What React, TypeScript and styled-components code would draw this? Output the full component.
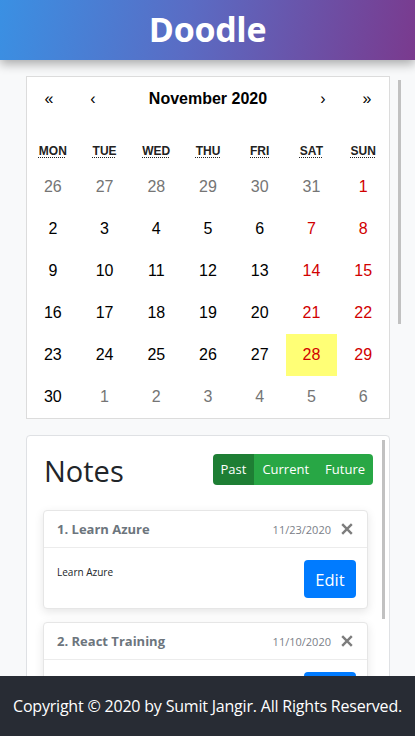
import React from "react";
import styled, { createGlobalStyle } from "styled-components";

const GlobalStyle = createGlobalStyle`
  * { box-sizing: border-box; }
  html, body { margin: 0; padding: 0; height: 100%; }
  body {
    background: #f8f9fa;
    font-family: "Open Sans", "Noto Sans", sans-serif;
    color: #212529;
  }
`;

const Page = styled.div`
  height: 100vh;
  display: flex;
  flex-direction: column;
  overflow: hidden;
`;

const Header = styled.header`
  height: 60px;
  flex: 0 0 60px;
  display: flex;
  align-items: center;
  justify-content: center;
  background: linear-gradient(100deg, #3a90e3 0%, #5a6cc4 45%, #7a3a8e 100%);
  box-shadow: 0 4px 10px rgba(0, 0, 0, 0.32);
  position: relative;
  z-index: 2;
`;

const Title = styled.h1`
  margin: 0;
  color: #fff;
  font-family: "Open Sans", sans-serif;
  font-weight: 700;
  font-size: 34px;
  letter-spacing: -0.3px;
  line-height: 1;
  padding-bottom: 2px;
`;

const Main = styled.main`
  flex: 1;
  overflow: hidden;
  padding: 16px 0 0 26px;
  display: flex;
  flex-direction: column;
  gap: 16px;
`;

const CalendarRow = styled.div`
  display: flex;
  gap: 8px;
  align-items: flex-start;
`;

const Thumb = styled.div<{ $h: number; $right?: number }>`
  width: 3px;
  height: ${(p) => p.$h}px;
  margin-top: 4px;
  margin-right: ${(p) => p.$right ?? 0}px;
  background: #c1c1c1;
  flex: 0 0 3px;
`;

const Calendar = styled.div`
  width: 364px;
  background: #fff;
  border: 1px solid #dcdcdc;
  font-family: "Liberation Sans", Arial, sans-serif;
`;

const Nav = styled.div`
  display: flex;
  height: 44px;
  margin-bottom: 16px;
`;

const NavButton = styled.button`
  width: 44px;
  flex: 0 0 44px;
  background: none;
  border: 0;
  font-family: "Liberation Sans", Arial, sans-serif;
  font-size: 16px;
  color: #000;
  padding: 0;
`;

const NavLabel = styled.div`
  flex: 1;
  display: flex;
  align-items: center;
  justify-content: center;
  font-weight: 700;
  font-size: 16px;
  color: #000;
`;

const Grid = styled.div`
  display: grid;
  grid-template-columns: repeat(7, 1fr);
`;

const Weekday = styled.div`
  height: 29px;
  display: flex;
  align-items: center;
  justify-content: center;
  font-size: 12px;
  font-weight: 700;
  color: #222;
  padding-bottom: 1px;
`;

const Abbr = styled.abbr`
  text-decoration: underline dotted;
  text-underline-offset: 2px;
  text-decoration-thickness: 1px;
`;

const Tile = styled.div<{ $tone: "normal" | "other" | "weekend"; $today?: boolean }>`
  height: 42px;
  display: flex;
  align-items: center;
  justify-content: center;
  font-size: 16px;
  background: ${(p) => (p.$today ? "#ffff76" : "transparent")};
  color: ${(p) =>
    p.$tone === "other" ? "#757575" : p.$tone === "weekend" ? "#d10000" : "#000"};
`;

const NotesCard = styled.section`
  width: 364px;
  background: #fff;
  border: 1px solid #dfe1e4;
  border-radius: 4px;
  display: flex;
  align-items: flex-start;
  flex-shrink: 0;
`;

const NotesBody = styled.div`
  flex: 1;
  padding: 13px 0 0 16px;
`;

const NotesHeader = styled.div`
  display: flex;
  align-items: center;
  justify-content: space-between;
  height: 40px;
  padding-right: 9px;
  margin-bottom: 21px;
`;

const NotesTitle = styled.h2`
  margin: 0;
  font-size: 29px;
  font-weight: 400;
  color: #212529;
  line-height: 1;
  padding-left: 1px;
  padding-top: 2px;
`;

const ButtonGroup = styled.div`
  display: flex;
  border-radius: 4px;
  overflow: hidden;
`;

const FilterButton = styled.button<{ $active?: boolean }>`
  height: 31px;
  border: 0;
  padding: 0 8px;
  background: ${(p) => (p.$active ? "#1e7e34" : "#28a745")};
  color: #fff;
  font-family: "Open Sans", sans-serif;
  font-size: 13px;
`;

const NoteList = styled.div`
  display: flex;
  flex-direction: column;
  gap: 13px;
  margin-right: 14px;
`;

const NoteCard = styled.article`
  background: #fff;
  border: 1px solid #e6e6e6;
  border-radius: 4px;
  box-shadow: 0 3px 10px rgba(0, 0, 0, 0.1);
`;

const NoteHead = styled.div`
  height: 37px;
  display: flex;
  align-items: center;
  padding: 0 14px 0 13px;
  border-bottom: 1px solid #ececec;
`;

const NoteTitle = styled.div`
  flex: 1;
  font-weight: 700;
  font-size: 13px;
  color: #6c757d;
`;

const NoteDate = styled.span`
  font-size: 11px;
  color: #7a8088;
  margin-right: 10px;
`;

const CloseButton = styled.button`
  border: 0;
  background: none;
  padding: 0;
  width: 12px;
  height: 12px;
  display: flex;
`;

const NoteBodyRow = styled.div`
  display: flex;
  justify-content: space-between;
  align-items: flex-start;
  padding: 12px 11px 10px 13px;
`;

const NoteText = styled.p`
  margin: 5px 0 0;
  font-size: 10px;
  color: #212529;
`;

const EditButton = styled.button`
  height: 38px;
  width: 52px;
  border: 0;
  border-radius: 4px;
  background: #007bff;
  color: #fff;
  font-family: "Open Sans", sans-serif;
  font-size: 16.5px;
  padding: 0;
`;

const Footer = styled.footer`
  height: 60px;
  flex: 0 0 60px;
  background: #282c34;
  color: #fff;
  display: flex;
  align-items: center;
  justify-content: center;
  font-size: 16px;
  position: relative;
  z-index: 2;
  letter-spacing: -0.2px;
`;

type Day = { n: number; tone: "normal" | "other" | "weekend"; today?: boolean };

const weeks: Day[][] = (() => {
  const days: Day[] = [26, 27, 28, 29, 30, 31].map((n) => ({ n, tone: "other" as const }));
  for (let d = 1; d <= 30; d++) days.push({ n: d, tone: "normal", today: d === 28 });
  for (let d = 1; d <= 6; d++) days.push({ n: d, tone: "other" });
  return Array.from({ length: 6 }, (_, w) =>
    days
      .slice(w * 7, w * 7 + 7)
      .map((day, i) => (day.tone === "normal" && i >= 5 ? { ...day, tone: "weekend" as const } : day))
  );
})();

const notes = [
  { id: 1, title: "Learn Azure", date: "11/23/2020", body: "Learn Azure" },
  { id: 2, title: "React Training", date: "11/10/2020", body: "React Training" },
];

const weekdays = ["Monday", "Tuesday", "Wednesday", "Thursday", "Friday", "Saturday", "Sunday"];

const CloseIcon = () => (
  <svg width="12" height="12" viewBox="0 0 12 12">
    <path d="M1.2 1.2 L10.8 10.8 M10.8 1.2 L1.2 10.8" stroke="#7d7d7d" strokeWidth="2.4" />
  </svg>
);

export default function App() {
  return (
    <>
      <GlobalStyle />
      <Page>
        <Header>
          <Title>Doodle</Title>
        </Header>
        <Main>
          <CalendarRow>
            <Calendar>
              <Nav>
                <NavButton>«</NavButton>
                <NavButton>‹</NavButton>
                <NavLabel>November 2020</NavLabel>
                <NavButton>›</NavButton>
                <NavButton>»</NavButton>
              </Nav>
              <Grid>
                {weekdays.map((d) => (
                  <Weekday key={d}>
                    <Abbr title={d}>{d.slice(0, 3).toUpperCase()}</Abbr>
                  </Weekday>
                ))}
                {weeks.flat().map((day, i) => (
                  <Tile key={i} $tone={day.tone} $today={day.today}>
                    {day.n}
                  </Tile>
                ))}
              </Grid>
            </Calendar>
            <Thumb $h={244} />
          </CalendarRow>
          <NotesCard>
            <NotesBody>
              <NotesHeader>
                <NotesTitle>Notes</NotesTitle>
                <ButtonGroup>
                  <FilterButton $active>Past</FilterButton>
                  <FilterButton>Current</FilterButton>
                  <FilterButton>Future</FilterButton>
                </ButtonGroup>
              </NotesHeader>
              <NoteList>
                {notes.map((n) => (
                  <NoteCard key={n.id}>
                    <NoteHead>
                      <NoteTitle>
                        {n.id}. {n.title}
                      </NoteTitle>
                      <NoteDate>{n.date}</NoteDate>
                      <CloseButton aria-label="Delete">
                        <CloseIcon />
                      </CloseButton>
                    </NoteHead>
                    <NoteBodyRow>
                      <NoteText>{n.body}</NoteText>
                      <EditButton>Edit</EditButton>
                    </NoteBodyRow>
                  </NoteCard>
                ))}
              </NoteList>
            </NotesBody>
            <Thumb $h={179} $right={4} />
          </NotesCard>
        </Main>
        <Footer>Copyright © 2020 by Sumit Jangir. All Rights Reserved.</Footer>
      </Page>
    </>
  );
}
